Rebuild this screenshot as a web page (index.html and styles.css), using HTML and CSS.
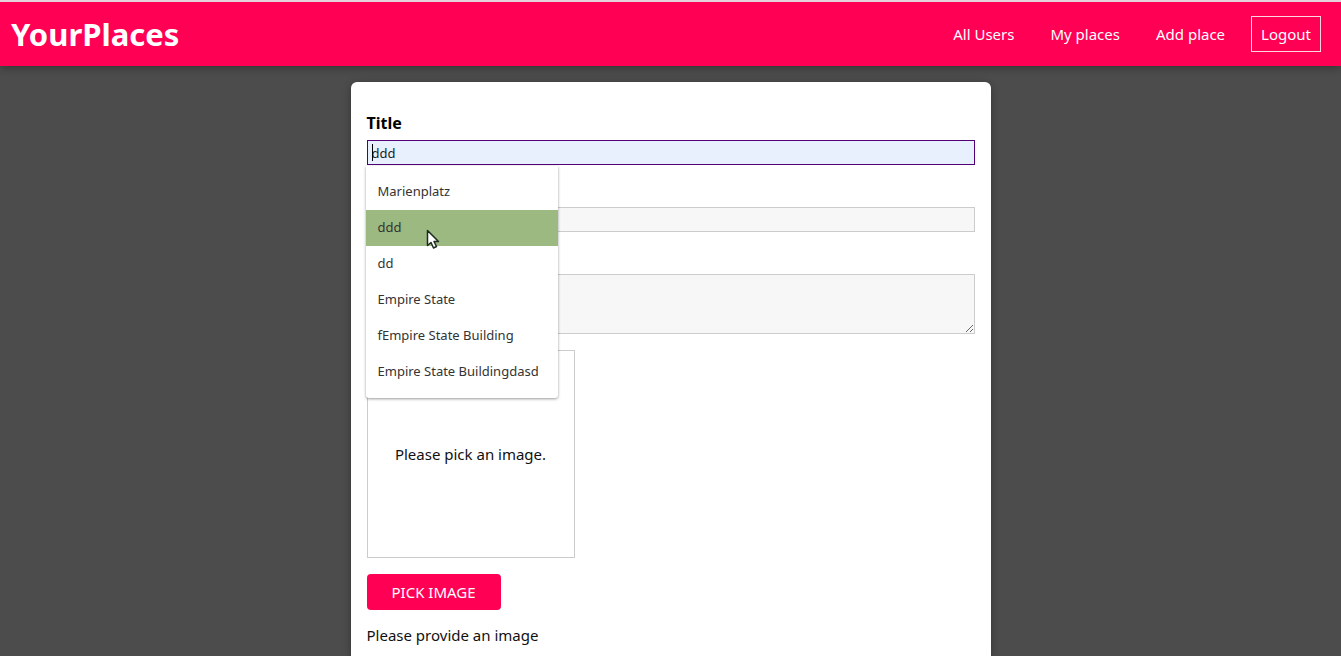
FILE: index.html
```html
<!DOCTYPE html>
<html lang="en">
<head>
<meta charset="utf-8">
<title>YourPlaces</title>
<meta name="viewport" content="width=device-width, initial-scale=1">
<link rel="stylesheet" href="styles.css">
</head>
<body>
<header class="main-header">
  <h1 class="brand"><a href="#">YourPlaces</a></h1>
  <nav>
    <ul class="nav-links">
      <li><a href="#">All Users</a></li>
      <li><a href="#">My places</a></li>
      <li><a href="#">Add place</a></li>
      <li><button type="button" class="logout">Logout</button></li>
    </ul>
  </nav>
</header>
<main>
  <form class="place-form">
    <div class="form-control">
      <label for="title">Title</label>
      <div class="input-wrap">
        <input id="title" class="active" type="text" value="ddd" autocomplete="off">
        <span class="caret"></span>
        <ul class="suggestions">
          <li>Marienplatz</li>
          <li class="selected">ddd
            <svg class="cursor" width="14" height="21" viewBox="0 0 14 21" aria-hidden="true"><path d="M1.5 1.5V16.5L5 13.5L7.5 19L10.5 17.5L8 12.5H12.5Z" fill="#fff" stroke="#1d2b22" stroke-width="1.5" stroke-linejoin="round"/></svg>
          </li>
          <li>dd</li>
          <li>Empire State</li>
          <li>fEmpire State Building</li>
          <li>Empire State Buildingdasd</li>
        </ul>
      </div>
    </div>
    <div class="form-control covered">
      <input type="text" aria-label="Address">
    </div>
    <div class="form-control covered">
      <textarea aria-label="Description"></textarea>
    </div>
    <div class="form-control">
      <div class="image-preview"><p>Please pick an image.</p></div>
      <button type="button" class="pick">PICK IMAGE</button>
    </div>
    <p class="hint">Please provide an image</p>
  </form>
</main>
</body>
</html>
```
FILE: styles.css
```css
* { box-sizing: border-box; }
html { background: #4c4c4c; }
body {
  margin: 0;
  border-top: 2px solid #e4d3da;
  font: 15px/18px "Noto Sans", sans-serif;
  color: #111;
}
ul, p, h1 { margin: 0; padding: 0; list-style: none; }
a { color: inherit; text-decoration: none; }
.main-header {
  display: flex;
  align-items: center;
  justify-content: space-between;
  height: 64px;
  padding: 0 20px 0 11px;
  background: #ff0055;
  color: #fff;
  box-shadow: 0 2px 8px rgba(0, 0, 0, 0.3);
}
.brand { font-size: 31px; line-height: 40px; font-weight: 700; }
.nav-links { display: flex; align-items: center; gap: 36px; }
.nav-links li:last-child { margin-left: -10px; }
.logout {
  display: block;
  padding: 8px 9px;
  border: 1px solid #ffd6e4;
  background: transparent;
  color: inherit;
  font: inherit;
}
.place-form {
  width: 90%;
  max-width: 640px;
  margin: 16px auto 0;
  padding: 32px 16px 12px;
  border-radius: 6px 6px 0 0;
  background: #fff;
  box-shadow: 0 2px 8px rgba(0, 0, 0, 0.3);
}
.form-control { margin-bottom: 16px; }
.form-control label {
  display: block;
  margin-bottom: 8px;
  color: #000;
  font-size: 16px;
  font-weight: 700;
}
.covered { padding-top: 26px; }
.input-wrap { position: relative; }
input, textarea {
  display: block;
  width: 100%;
  border: 1px solid #ccc;
  border-radius: 0;
  outline: none;
  background: #f7f7f7;
  color: #222;
  font: 13px/18px "Noto Sans", sans-serif;
}
input { height: 25px; padding: 0 4px; }
textarea { height: 60px; padding: 2px; resize: vertical; }
input.active { border-color: #510077; background: #e8f0fe; }
.caret {
  position: absolute;
  top: 4px;
  left: 5px;
  width: 1px;
  height: 17px;
  background: #000;
}
.suggestions {
  position: absolute;
  z-index: 2;
  top: 26px;
  left: -1px;
  width: 192px;
  padding: 8px 0;
  border-radius: 0 0 3px 3px;
  background: #fff;
  box-shadow: 0 1px 3px rgba(0, 0, 0, 0.4);
  color: #333;
  font-size: 13px;
  line-height: 34px;
}
.suggestions li { position: relative; padding: 0 12px 2px; white-space: nowrap; }
.suggestions .selected { background: #9bb980; }
.cursor { position: absolute; top: 19px; left: 60px; }
.image-preview {
  display: flex;
  align-items: center;
  justify-content: center;
  width: 208px;
  height: 208px;
  margin-bottom: 16px;
  border: 1px solid #ccc;
}
.pick {
  display: block;
  height: 36px;
  padding: 0 25px;
  border: 0;
  border-radius: 4px;
  background: #ff0055;
  color: #fff;
  font: inherit;
}
```
